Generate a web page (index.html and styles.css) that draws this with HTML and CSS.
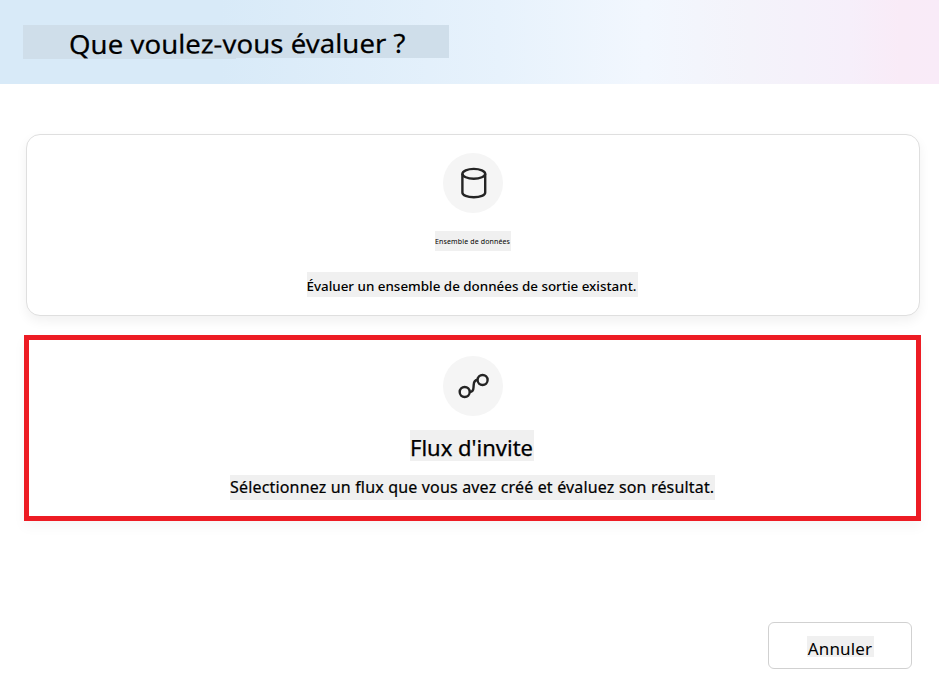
FILE: index.html
```
<!DOCTYPE html>
<html lang="fr">
<head>
<meta charset="utf-8">
<title>Que voulez-vous évaluer ?</title>
<link rel="stylesheet" href="styles.css">
</head>
<body>
<header class="header">
  <h1 class="title"><span class="title-text">Que voulez-vous évaluer ?</span></h1>
</header>
<main class="options">
  <section class="card">
    <div class="icon">
      <svg width="60" height="60" viewBox="0 0 60 60" fill="none" stroke="#242424" stroke-width="2.4">
        <ellipse cx="30.8" cy="20.8" rx="11.4" ry="4.9"/>
        <path d="M19.4 20.8V39.4C19.4 42.3 24.3 44.2 30.8 44.2S42.2 42.3 42.2 39.4V20.8"/>
      </svg>
    </div>
    <h2 class="label label-small"><span>Ensemble de données</span></h2>
    <p class="text text-dataset"><span>Évaluer un ensemble de données de sortie existant.</span></p>
  </section>
  <section class="card card-selected">
    <div class="icon">
      <svg width="60" height="60" viewBox="0 0 60 60" fill="none" stroke="#242424" stroke-width="2.4">
        <circle cx="21.7" cy="36" r="5"/>
        <circle cx="39.6" cy="24" r="5"/>
        <path d="M26.6 36C29.3 36 30.4 34.5 30.5 31.5L30.7 28.8C30.9 25.6 32 24 34.6 24"/>
      </svg>
    </div>
    <h2 class="label label-flow"><span>Flux d'invite</span></h2>
    <p class="text text-flow"><span>Sélectionnez un flux que vous avez créé et évaluez son résultat.</span></p>
  </section>
</main>
<footer class="footer">
  <button class="cancel"><span>Annuler</span></button>
</footer>
</body>
</html>
```
FILE: styles.css
```
* { box-sizing: border-box; }
body {
  margin: 0;
  width: 939px;
  height: 679px;
  overflow: hidden;
  background: #fff;
  color: #000;
  font-family: "Noto Sans", sans-serif;
}
h1, h2, p { margin: 0; font-weight: 400; white-space: nowrap; }
.header {
  height: 84px;
  padding: 25px 23px;
  background: linear-gradient(90deg, #d8eaf8 0, #d8eaf8 220px, #e7f2fc 500px, #f2f7fe 645px, #f4f3fa 750px, #f6effa 850px, #f9ebf7 900px, #f9ebf8 100%);
}
.title {
  width: 426px;
  height: 34px;
  padding-left: 46px;
  background: #cfdeea;
  clip-path: polygon(0 0, 100% 0, 100% 33px, 213px 33px, 213px 34px, 0 34px);
  font-size: 26px;
  line-height: 38px;
}
.title-text {
  display: inline-block;
  transform: rotate(-0.2deg) scaleX(1.062);
  transform-origin: 0 50%;
  -webkit-text-stroke: .2px #000;
}
.options {
  display: flex;
  flex-direction: column;
  padding: 50px 18px 0 24px;
}
.card {
  display: flex;
  flex-direction: column;
  align-items: center;
  width: 894px;
  height: 182px;
  margin-left: 2px;
  padding-top: 18px;
  border: 1px solid #dfdfdf;
  border-radius: 14px;
  background: #fff;
  box-shadow: 0 5px 12px rgba(0, 0, 0, .06);
}
.card-selected {
  width: 897px;
  height: 186px;
  margin: 19px 0 0;
  padding-top: 16px;
  border: 5px solid #ed1c24;
  border-radius: 0;
  box-shadow: 0 6px 12px rgba(0, 0, 0, .04);
}
.icon { width: 60px; height: 60px; border-radius: 50%; background: #f5f5f5; }
.icon svg { display: block; }
.label, .text { background: #f0f0f0; }
.label-small { width: 76px; height: 20px; margin-top: 18px; font-size: 7px; line-height: 21px; letter-spacing: .14px; }
.text-dataset { width: 331px; height: 25px; margin: 21px 2px 0 0; font-size: 13.4px; font-weight: 500; line-height: 28px; }
.label-flow { width: 124px; height: 31px; margin: 14px 1px 0 0; font-size: 22px; line-height: 35px; -webkit-text-stroke: .25px #000; }
.text-flow { width: 485px; height: 25px; margin-top: 14px; font-size: 16px; line-height: 25px; letter-spacing: .17px; -webkit-text-stroke: .2px #000; }
.footer { display: flex; justify-content: flex-end; padding: 101px 27px 0 0; }
.cancel {
  display: flex;
  justify-content: center;
  width: 144px;
  height: 47px;
  padding: 13px 0 0;
  border: 1px solid #d1d1d1;
  border-radius: 6px;
  background: #fff;
  color: #000;
  font: 17px/26px "Noto Sans", sans-serif;
}
.cancel span { width: 67px; height: 21px; background: #f0f0f0; letter-spacing: .15px; }
```
